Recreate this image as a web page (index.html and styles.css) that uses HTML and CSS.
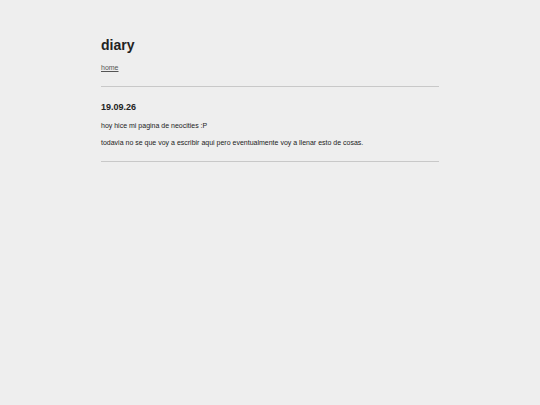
FILE: index.html
```html
<!DOCTYPE html>
<html lang="es">
<head>
    <meta charset="UTF-8">
    <meta name="viewport" content="width=device-width, initial-scale=1.0">
    <title>diary</title>
    <link rel="stylesheet" href="styles.css">
</head>
<body>
    <main class="page">
        <h1>diary</h1>
        <a class="home" href="index.html">home</a>
        <hr>
        <!-- entries -->
        <article class="entry">
            <h2>19.09.26</h2>
            <p>hoy hice mi pagina de neocities :P</p>
            <p>todavia no se que voy a escribir aqui pero eventualmente voy a llenar esto de cosas.</p>
        </article>
        <hr>
    </main>
</body>
</html>
```

FILE: styles.css
```css
body {
    margin: 0;
    background-color: #eee;
    color: #222;
    font-family: Arial, "Liberation Sans", sans-serif;
    font-size: 7px;
    line-height: 11px;
}
.page {
    max-width: 338px;
    margin: 0 auto;
    padding: 34px 20px;
}
h1 {
    margin: 0 0 6px;
    font-size: 14px;
    line-height: 22px;
}
h2 {
    margin: 0 0 6px;
    font-size: 9px;
    line-height: 14px;
}
p {
    margin: 0 0 6px;
}
.home {
    display: block;
    width: fit-content;
    color: #555;
}
hr {
    margin: 13px 0;
    border: 0;
    border-top: 1px solid #c8c8c8;
}
```
